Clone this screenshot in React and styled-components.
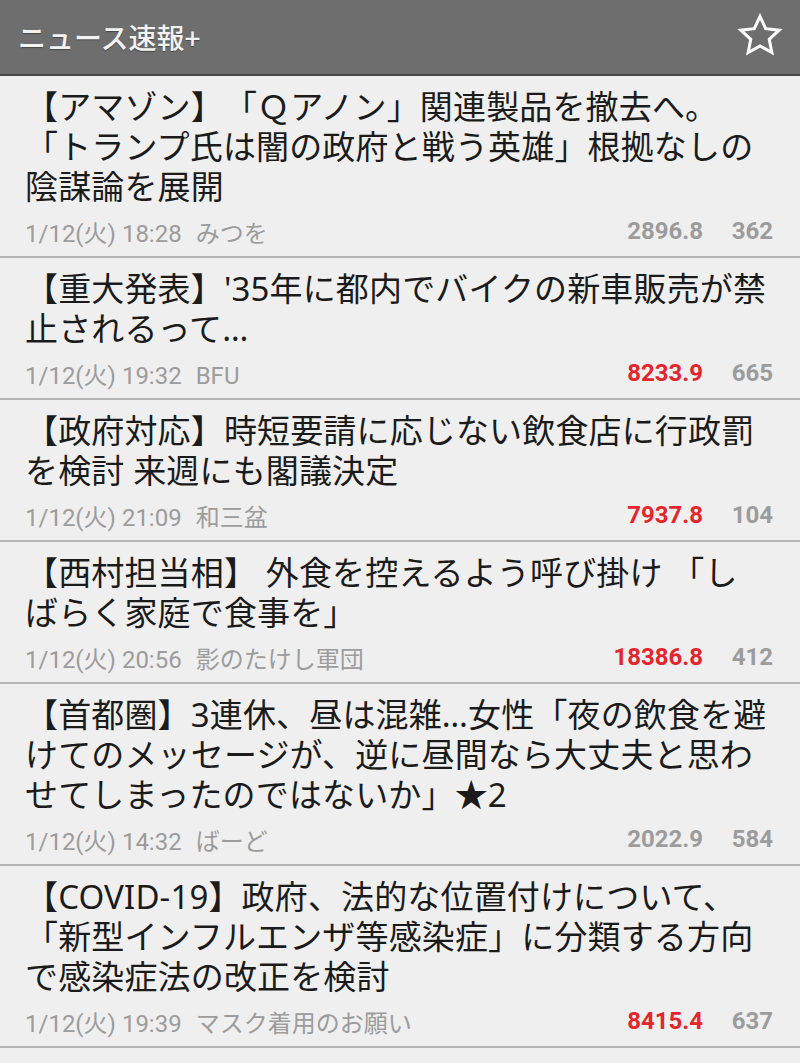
import React from 'react';
import styled, { createGlobalStyle } from 'styled-components';

const GlobalStyle = createGlobalStyle`
  html, body {
    margin: 0;
    padding: 0;
    background-color: #efefef;
    overflow: hidden;
  }
`;

const Page = styled.div`
  width: 800px;
  min-height: 1063px;
  background-color: #efefef;
`;

const Header = styled.header`
  height: 74px;
  background-color: #6e6e6e;
  border-bottom: 2px solid #474747;
  display: flex;
  align-items: center;
  justify-content: space-between;
  padding: 0 16px 0 18px;
`;

const HeaderTitle = styled.h1`
  margin: 0;
  font-family: 'Noto Sans CJK JP', 'Noto Sans', sans-serif;
  font-size: 28px;
  font-weight: 500;
  color: #f2f2f2;
  text-shadow: 0 1px 1px rgba(0, 0, 0, 0.35);
  text-spacing-trim: space-all;
`;

const StarButton = styled.button`
  background: none;
  border: none;
  padding: 0;
  width: 48px;
  height: 48px;
  display: flex;
  align-items: center;
  justify-content: center;
  margin-top: -2px;
`;

const List = styled.ul`
  list-style: none;
  margin: 0;
  padding: 0;
`;

const Item = styled.li`
  padding: 11px 30px 10px 25px;
  border-bottom: 2px solid #b6b6b6;
`;

const Title = styled.div`
  font-family: 'Noto Sans', 'Noto Sans CJK JP', sans-serif;
  font-size: 33px;
  letter-spacing: 0.15px;
  line-height: 40px;
  color: #1b1b1b;
  line-break: strict;
  text-spacing-trim: space-all;
`;

const Meta = styled.div`
  margin-top: 9px;
  margin-right: -12px;
  height: 30px;
  display: flex;
  align-items: center;
  font-family: Roboto, 'Noto Sans CJK JP', sans-serif;
  font-size: 24px;
  color: #9c9c9c;
  padding-right: 9px;
  text-spacing-trim: space-all;
`;

const Posted = styled.span`
  flex: 1;
`;

const Name = styled.span`
  margin-left: 14px;
`;

const Score = styled.span`
  font-weight: bold;
  color: ${(p) => (p.hot ? '#e3262b' : '#9c9c9c')};
`;

const Count = styled.span`
  width: 70px;
  text-align: right;
  font-weight: bold;
  color: #9c9c9c;
`;

const Star = () => (
  <svg width="48" height="48" viewBox="0 0 24 24">
    <polygon
      points="12,2.2 14.85,8.35 21.6,9.1 16.6,13.65 17.95,20.3 12,16.95 6.05,20.3 7.4,13.65 2.4,9.1 9.15,8.35"
      fill="none"
      stroke="#ffffff"
      strokeWidth="1.5"
      strokeLinejoin="miter"
    />
  </svg>
);

const news = [
  {
    title: ['【アマゾン】「Ｑアノン」関連製品を撤去へ。', '「トランプ氏は闇の政府と戦う英雄」根拠なしの陰謀論を展開'],
    date: '1/12(火) 18:28',
    name: 'みつを',
    score: '2896.8',
    hot: false,
    count: 362,
  },
  {
    title: ["【重大発表】'35年に都内でバイクの新車販売が禁止されるって…"],
    date: '1/12(火) 19:32',
    name: 'BFU',
    score: '8233.9',
    hot: true,
    count: 665,
  },
  {
    title: ['【政府対応】時短要請に応じない飲食店に行政罰を検討 来週にも閣議決定'],
    date: '1/12(火) 21:09',
    name: '和三盆',
    score: '7937.8',
    hot: true,
    count: 104,
  },
  {
    title: ['【西村担当相】 外食を控えるよう呼び掛け 「しばらく家庭で食事を」'],
    date: '1/12(火) 20:56',
    name: '影のたけし軍団',
    score: '18386.8',
    hot: true,
    count: 412,
  },
  {
    title: ['【首都圏】3連休、昼は混雑…女性「夜の飲食を避けてのメッセージが、逆に昼間なら大丈夫と思わせてしまったのではないか」★2'],
    date: '1/12(火) 14:32',
    name: 'ばーど',
    score: '2022.9',
    hot: false,
    count: 584,
  },
  {
    title: ['【COVID-19】政府、法的な位置付けについて、「新型インフルエンザ等感染症」に分類する方向で感染症法の改正を検討'],
    date: '1/12(火) 19:39',
    name: 'マスク着用のお願い',
    score: '8415.4',
    hot: true,
    count: 637,
  },
];

const App = () => {
  return (
    <Page>
      <GlobalStyle />
      <Header>
        <HeaderTitle>ニュース速報+</HeaderTitle>
        <StarButton aria-label="お気に入り">
          <Star />
        </StarButton>
      </Header>
      <List>
        {news.map((n, i) => (
          <Item key={i}>
            <Title>
              {n.title.map((t, j) => (
                <React.Fragment key={j}>
                  {j > 0 && <br />}
                  {t}
                </React.Fragment>
              ))}
            </Title>
            <Meta>
              <Posted>
                {n.date}
                <Name>{n.name}</Name>
              </Posted>
              <Score hot={n.hot}>{n.score}</Score>
              <Count>{n.count}</Count>
            </Meta>
          </Item>
        ))}
      </List>
    </Page>
  );
};

export default App;
